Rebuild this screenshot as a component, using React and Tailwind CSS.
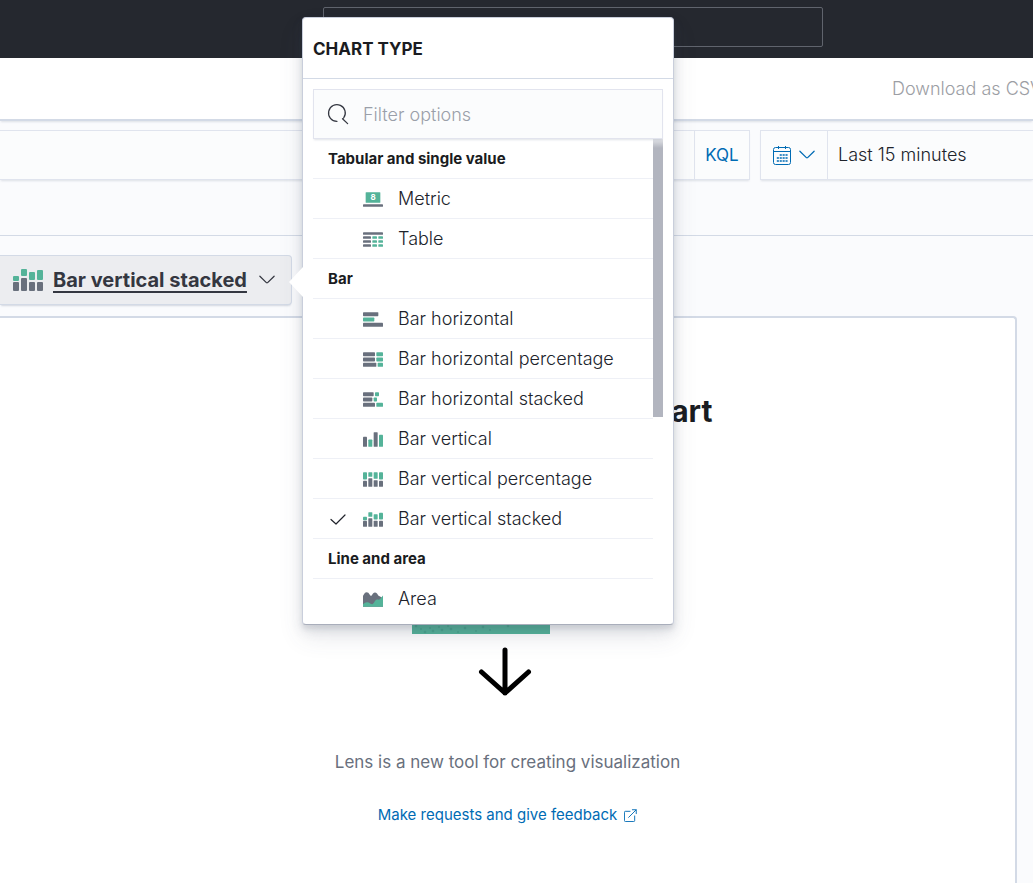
import { useState } from 'react';

const GRAY = '#69707d';
const GREEN = '#54b399';

// [x, y, width, height, color] on a 30x22 grid
const iconRects = {
  metric: [
    [4, 0, 22, 16, GREEN],
    [0, 18, 30, 4, GRAY]
  ],
  table: [
    [0, 0, 30, 4, GRAY],
    [0, 6, 12, 4, GRAY], [14, 6, 7, 4, GREEN], [23, 6, 7, 4, GREEN],
    [0, 12, 12, 4, GRAY], [14, 12, 7, 4, GREEN], [23, 12, 7, 4, GREEN],
    [0, 18, 12, 4, GRAY], [14, 18, 7, 4, GREEN], [23, 18, 7, 4, GREEN]
  ],
  barHorizontal: [
    [0, 0, 23, 6, GRAY],
    [0, 8, 17, 6, GREEN],
    [0, 16, 30, 6, GRAY]
  ],
  barHorizontalPercentage: [
    [0, 0, 18, 6, GRAY], [20, 0, 10, 6, GREEN],
    [0, 8, 18, 6, GRAY], [20, 8, 10, 6, GREEN],
    [0, 16, 20, 6, GRAY], [22, 16, 8, 6, GREEN]
  ],
  barHorizontalStacked: [
    [0, 0, 16, 6, GRAY], [18, 0, 6, 6, GREEN],
    [0, 8, 14, 6, GRAY], [16, 8, 5, 6, GREEN],
    [0, 16, 18, 6, GRAY], [20, 16, 10, 6, GREEN]
  ],
  barVertical: [
    [0, 7, 6, 15, GRAY],
    [8, 11, 6, 11, GREEN],
    [16, 0, 6, 22, GRAY],
    [24, 4, 6, 18, GREEN]
  ],
  barVerticalPercentage: [
    [0, 0, 6, 11, GREEN], [0, 13, 6, 9, GRAY],
    [8, 0, 6, 7, GREEN], [8, 9, 6, 13, GRAY],
    [16, 0, 6, 10, GREEN], [16, 12, 6, 10, GRAY],
    [24, 0, 6, 11, GREEN], [24, 13, 6, 9, GRAY]
  ],
  barVerticalStacked: [
    [0, 7, 6, 5, GREEN], [0, 13, 6, 9, GRAY],
    [8, 0, 6, 7, GREEN], [8, 9, 6, 13, GRAY],
    [16, 3, 6, 8, GREEN], [16, 13, 6, 9, GRAY],
    [24, 1, 6, 10, GREEN], [24, 13, 6, 9, GRAY]
  ]
};

const chartGroups = [
  {
    label: 'Tabular and single value',
    options: [
      { id: 'metric', label: 'Metric' },
      { id: 'table', label: 'Table' }
    ]
  },
  {
    label: 'Bar',
    options: [
      { id: 'barHorizontal', label: 'Bar horizontal' },
      { id: 'barHorizontalPercentage', label: 'Bar horizontal percentage' },
      { id: 'barHorizontalStacked', label: 'Bar horizontal stacked' },
      { id: 'barVertical', label: 'Bar vertical' },
      { id: 'barVerticalPercentage', label: 'Bar vertical percentage' },
      { id: 'barVerticalStacked', label: 'Bar vertical stacked' }
    ]
  },
  {
    label: 'Line and area',
    options: [{ id: 'area', label: 'Area' }]
  }
];

function ChartIcon({ type, className }) {
  return (
    <svg viewBox="0 0 30 22" className={className} aria-hidden="true">
      {type === 'area' && (
        <>
          <path d="M0 22V6q0-1 1-2l2-3q2.500-2 5 0l3 4q1 1 2 0l2-3q3-3 6 0l2 3q1 1 2 1l5 3v13z" fill={GRAY} />
          <path d="M0 22v-4q3-3 6-3c4 0 5 3 8 3 3-1 4-7 7-7 2 0 3 1 5-1l4-5v17z" fill={GREEN} />
        </>
      )}
      {(iconRects[type] || []).map(([x, y, w, h, fill]) => (
        <rect key={`${x}-${y}`} x={x} y={y} width={w} height={h} rx="1" fill={fill} />
      ))}
      {type === 'metric' && (
        <text x="15" y="12" textAnchor="middle" fontSize="12" fontWeight="700" fill="#fff">8</text>
      )}
    </svg>
  );
}

function ChevronDown() {
  return (
    <svg viewBox="0 0 16 16" className="size-5 shrink-0" fill="none" stroke="currentColor" strokeLinecap="round" strokeLinejoin="round" aria-hidden="true">
      <path d="M2.300 5l5.200 5.100q.5.4 1 0L13.700 5" />
    </svg>
  );
}

function SearchIcon() {
  return (
    <svg viewBox="0 0 16 16" className="size-5 shrink-0 overflow-visible" fill="none" stroke="currentColor" strokeLinecap="round" aria-hidden="true">
      <path d="M7.200 13.900a6.700 6.700 0 1 1 5.300-2.700M11.600 11.800l4.100 3.900" />
    </svg>
  );
}

function CalendarIcon() {
  return (
    <svg viewBox="0 0 18 19" className="h-[19px] w-[18px] shrink-0 overflow-visible" fill="none" stroke="currentColor" aria-hidden="true">
      <rect x=".5" y="1.500" width="17" height="17" rx="2" />
      <path d="M.5 5.500h17M5.500 0v3M12.500 0v3" />
      <path d="M6.700 9h7.900M3.800 12h10.800M3.800 15h10.800" strokeWidth="1.600" strokeDasharray="2.100 .8" />
    </svg>
  );
}

function ExternalIcon() {
  return (
    <svg viewBox="0 0 14 14" className="size-[13px]" fill="none" stroke="currentColor" strokeLinecap="round" strokeLinejoin="round" aria-hidden="true">
      <path d="M6.500 2.500h-5a1 1 0 0 0-1 1v9a1 1 0 0 0 1 1h9a1 1 0 0 0 1-1v-5M9 .8h4.200V5M13 1L5 9" />
    </svg>
  );
}

function ChartTypePopover({ selected, onSelect }) {
  const [filter, setFilter] = useState('');

  return (
    <div className="absolute left-full -top-[238px] z-10 ml-[10px] w-[372px] rounded border border-[#c9cedb] border-b-[#a9aebb] bg-white pb-[5px] shadow-[0_12px_24px_0_rgba(65,78,101,0.12),0_6px_12px_0_rgba(65,78,101,0.12),0_4px_4px_0_rgba(65,78,101,0.1)]">
      <svg viewBox="0 0 14 30" className="absolute top-[249px] right-full h-[30px] w-[14px]" aria-hidden="true">
        <path d="M14 0L0 15l14 15z" fill="#fff" />
      </svg>

      <h2 className="border-b border-[#d3dae6] px-[10px] pt-[19px] pb-[17px] text-[17px] leading-6 font-bold text-[#1a1c21]">
        CHART TYPE
      </h2>

      <div className="px-[10px] pt-[10px]">
        <label className="relative z-10 flex h-[50px] items-center gap-[15px] border border-[#e2e4ee] bg-[#fbfcfd] px-[14px] text-[#343741] shadow-[0_2px_2px_-1px_rgba(152,162,179,0.3)]">
          <SearchIcon />
          <input
            type="text"
            aria-label="Filter options"
            placeholder="Filter options"
            value={filter}
            onChange={e => setFilter(e.target.value)}
            className="min-w-0 flex-1 bg-transparent pt-[2px] text-lg font-light outline-none placeholder:text-[#9a9fa9]"
          />
        </label>

        <div className="relative pr-[10px]">
          <div>
            {chartGroups.map(group => (
              <section key={group.label} className="group/section">
                <h3 className="flex h-10 items-center border-b border-[#eef0f6] px-[15px] text-[15px] font-bold text-[#1a1c21]">
                  {group.label}
                </h3>
                <ul>
                  {group.options
                    .filter(option => option.label.toLowerCase().includes(filter.toLowerCase()))
                    .map(option => (
                      <li key={option.id} className="border-b border-[#eef0f6] group-last/section:last:border-transparent">
                        <button
                          type="button"
                          aria-pressed={selected === option.id}
                          onClick={() => onSelect(option.id)}
                          className="flex h-[39px] w-full items-center px-[15px] text-left text-lg font-light text-[#20232b]"
                        >
                          <span className="w-[35px]">
                            {selected === option.id && (
                              <svg viewBox="0 0 20 20" className="size-5" fill="none" stroke="currentColor" strokeLinecap="round" strokeLinejoin="round" aria-hidden="true">
                                <path d="M3 10.500l5 4.500 9-9" strokeWidth="1.200" />
                              </svg>
                            )}
                          </span>
                          <ChartIcon type={option.id} className="mt-[2px] mr-[15px] h-[15px] w-5" />
                          {option.label}
                        </button>
                      </li>
                    ))}
                </ul>
              </section>
            ))}
          </div>

          {/* scroll thumb */}
          <div className="absolute top-0 right-0 h-[278px] w-[10px] bg-linear-to-b from-[#e3e4e8] to-[#b2b5bf] to-[9px]" />
        </div>
      </div>
    </div>
  );
}

function App() {
  const [chartType, setChartType] = useState('barVerticalStacked');
  const current = chartGroups.flatMap(g => g.options).find(o => o.id === chartType);

  return (
    <div className="flex min-h-screen flex-col overflow-hidden bg-[#fafbfd] font-['Inter',sans-serif] text-lg text-[#343741]">
      <header className="flex h-[58px] justify-center bg-[#25282f] pt-[7px] pl-[113px]">
        <input
          type="search"
          aria-label="Search Elastic"
          className="h-10 w-[500px] rounded-xs border border-[#60646d] bg-transparent px-3 text-white outline-none"
        />
      </header>

      <nav className="flex h-[63px] items-center justify-end border-b-2 border-[#d3dae6] bg-white shadow-[0_2px_2px_-1px_rgba(152,162,179,0.3)]">
        <button type="button" disabled className="w-[141px] text-left font-light whitespace-nowrap text-[#9c9ea4]">
          Download as CSV
        </button>
      </nav>

      <div className="flex gap-[10px] border-b border-[#d3dae6] pt-[9px] pb-[55px]">
        <div className="flex h-[50px] min-w-0 flex-1 border border-l-0 border-[#e0e4ee] bg-[#fbfcfd] shadow-[0_2px_2px_-1px_rgba(152,162,179,0.3)]">
          <input type="text" aria-label="Query" className="min-w-0 flex-1 bg-transparent px-3 outline-none" />
          <button type="button" className="w-[55px] border-l border-[#e0e4ee] text-[17px] text-[#006bb4]">KQL</button>
        </div>
        <div className="flex h-[50px] w-[273px] border border-r-0 border-[#e0e4ee] bg-[#fbfcfd] shadow-[0_2px_2px_-1px_rgba(152,162,179,0.3)]">
          <button type="button" aria-label="Quick time ranges" className="flex w-[67px] items-center gap-[6px] border-r border-[#e0e4ee] pl-3 text-[#006bb4]">
            <CalendarIcon />
            <ChevronDown />
          </button>
          <button type="button" className="flex-1 px-[10px] text-left font-light text-[#20232b]">Last 15 minutes</button>
        </div>
      </div>

      <div className="relative mt-[19px] w-[292px]">
        <button type="button" className="flex h-[50px] w-full items-center gap-[10px] rounded-r border border-l-0 border-[#d3dae6] bg-[#ecedf0] pl-[13px] shadow-[0_2px_2px_-1px_rgba(152,162,179,0.4)]">
          <ChartIcon type={chartType} className="h-[22px] w-[30px]" />
          <span className="text-xl font-bold underline decoration-2 underline-offset-4">{current.label}</span>
          <ChevronDown />
        </button>
        <ChartTypePopover selected={chartType} onSelect={setChartType} />
      </div>

      <main className="mt-[11px] mr-4 flex flex-1 flex-col items-center rounded-tr border-t-2 border-r-2 border-[#d3dae6] bg-white pt-[73px]">
        <h1 className="pl-[10px] text-3xl leading-10 font-bold text-[#1a1c21]">Drop the fields here to start</h1>
        <svg viewBox="0 0 200 270" className="mt-[10px] h-[270px] w-[200px]" aria-hidden="true">
          <rect x="4" y="60" width="138" height="133" fill={GREEN} />
          <g fill="#3f9b84" opacity=".6">
            {[8, 13, 17, 22, 25, 31, 34, 40, 43, 50, 57, 68, 75, 82, 100].map((x, i) => (
              <circle key={x} cx={x} cy={185 + (i * 3) % 7} r={i % 2 ? 1 : 1.3} />
            ))}
          </g>
          <path d="M97 209v43M73.500 231L97 252l23.500-21" fill="none" stroke="#000" strokeWidth="5" strokeLinecap="round" strokeLinejoin="round" />
        </svg>
        <p className="mt-[37px] text-[17px] leading-7 text-[#69707d]">Lens is a new tool for creating visualization</p>
        <a href="#feedback" className="mt-[27px] flex items-center gap-[7px] text-[15px] leading-6 text-[#006bb4]">
          Make requests and give feedback
          <ExternalIcon />
        </a>
      </main>
    </div>
  );
}

export default App;
